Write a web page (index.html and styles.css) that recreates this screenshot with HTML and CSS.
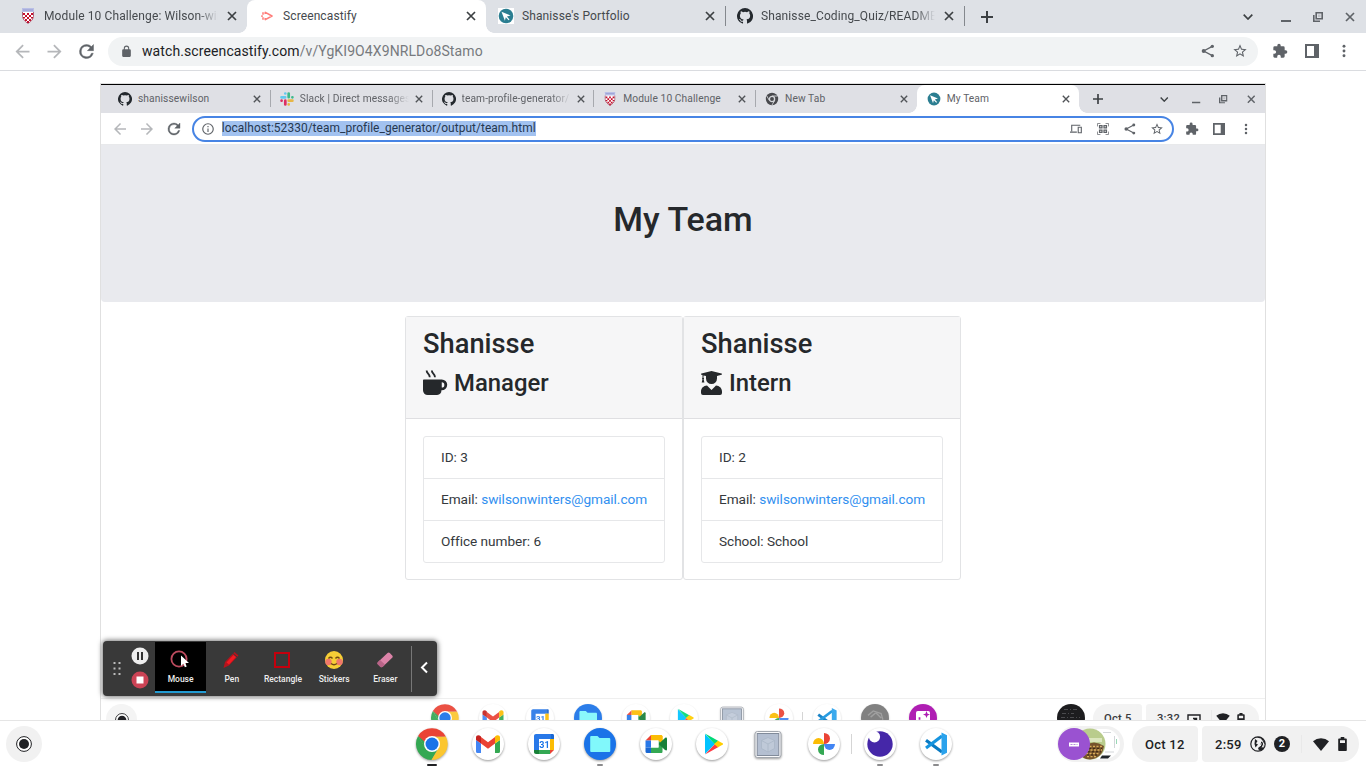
FILE: index.html
```html
<!DOCTYPE html>
<html lang="en">
<head>
<meta charset="utf-8">
<title>Screencastify</title>
<link rel="stylesheet" href="styles.css">
</head>
<body>
<svg class="defs" width="0" height="0">
  <symbol id="x" viewBox="0 0 10 10"><path d="M1 1l8 8M9 1l-8 8" stroke="currentColor" stroke-width="1.7" fill="none"/></symbol>
  <symbol id="plus" viewBox="0 0 12 12"><path d="M6 0v12M0 6h12" stroke="currentColor" stroke-width="2" fill="none"/></symbol>
  <symbol id="chev" viewBox="0 0 10 6"><path d="M.7.7L5 5 9.300.7" stroke="currentColor" stroke-width="1.7" fill="none"/></symbol>
  <symbol id="min" viewBox="0 0 10 10"><path d="M0 9h10" stroke="currentColor" stroke-width="2"/></symbol>
  <symbol id="restore" viewBox="0 0 10 10"><path d="M3.200.8h6v6h-6zM.8 3v6.200h6.200" stroke="currentColor" stroke-width="1.600" fill="none"/><path d="M5 2.500h2.500v2.500H5z" fill="currentColor" opacity=".25"/></symbol>
  <symbol id="back" viewBox="0 0 24 24"><path fill="currentColor" d="M20 11H7.830l5.590-5.590L12 4l-8 8 8 8 1.410-1.410L7.830 13H20v-2z"/></symbol>
  <symbol id="fwd" viewBox="0 0 24 24"><path fill="currentColor" d="M12 4l-1.410 1.410L16.170 11H4v2h12.170l-5.580 5.590L12 20l8-8z"/></symbol>
  <symbol id="reload" viewBox="0 0 24 24"><path fill="currentColor" stroke="currentColor" stroke-width=".5" d="M17.650 6.350A7.960 7.960 0 0 0 12 4a8 8 0 1 0 7.730 10h-2.080A6 6 0 1 1 12 6c1.660 0 3.140.69 4.220 1.780L13 11h7V4l-2.350 2.350z"/></symbol>
  <symbol id="lock" viewBox="0 0 24 24"><path fill="currentColor" d="M18 8h-1V6A5 5 0 0 0 7 6v2H6a2 2 0 0 0-2 2v10c0 1.100.9 2 2 2h12a2 2 0 0 0 2-2V10a2 2 0 0 0-2-2zM9 6a3 3 0 0 1 6 0v2H9V6z"/></symbol>
  <symbol id="info" viewBox="0 0 24 24"><path fill="currentColor" d="M11 7h2v2h-2zm0 4h2v6h-2zm1-9a10 10 0 1 0 0 20 10 10 0 0 0 0-20zm0 18a8 8 0 1 1 0-16 8 8 0 0 1 0 16z"/></symbol>
  <symbol id="share" viewBox="0 0 24 24"><path fill="none" stroke="currentColor" stroke-width="2" d="M18.500 5L5.500 12l13 7"/><g fill="currentColor"><circle cx="18.500" cy="5" r="2.500"/><circle cx="5.500" cy="12" r="3"/><circle cx="18.500" cy="19" r="2.500"/></g></symbol>
  <symbol id="star" viewBox="0 0 24 24"><path fill="currentColor" d="M22 9.240l-7.190-.62L12 2 9.190 8.630 2 9.240l5.460 4.730L5.820 21 12 17.270 18.180 21l-1.630-7.030L22 9.240zM12 15.400l-3.760 2.270 1-4.280-3.320-2.880 4.380-.38L12 6.100l1.710 4.040 4.380.38-3.320 2.880 1 4.280L12 15.400z"/></symbol>
  <symbol id="puzzle" viewBox="0 0 24 24"><path fill="currentColor" d="M20.500 11H19V7a2 2 0 0 0-2-2h-4V3.500a2.500 2.500 0 0 0-5 0V5H4a2 2 0 0 0-2 2v3.800h1.500a2.700 2.700 0 0 1 0 5.400H2V20c0 1.100.9 2 2 2h3.800v-1.500a2.700 2.700 0 0 1 5.400 0V22H17a2 2 0 0 0 2-2v-4h1.500a2.500 2.500 0 0 0 0-5z"/></symbol>
  <symbol id="panel" viewBox="0 0 14 14"><path fill="currentColor" fill-rule="evenodd" d="M0 0h14v14H0zM2 2v10h7V2z"/></symbol>
  <symbol id="menu" viewBox="0 0 14 14"><g fill="currentColor"><circle cx="7" cy="2.200" r="1.450"/><circle cx="7" cy="7" r="1.450"/><circle cx="7" cy="11.800" r="1.450"/></g></symbol>
  <symbol id="devices" viewBox="0 0 14 12"><path fill="none" stroke="currentColor" stroke-width="1.300" d="M12 1.600H2v7M0 9.600h8M9.600 4h3.600v6.300H9.600z"/></symbol>
  <symbol id="qr" viewBox="0 0 14 14"><path fill="none" stroke="currentColor" stroke-width="1.100" opacity=".75" d="M.6 4V.6H4M10 .6h3.400V4M13.400 10v3.400H10M4 13.400H.6V10"/><path fill="none" stroke="currentColor" stroke-width="1.500" d="M3 3h2.800v2.800H3zM8.200 3H11v2.800H8.200zM3 8.200h2.800V11H3zM8.200 8.200H11V11H8.200z"/></symbol>
  <symbol id="gh" viewBox="0 0 16 16"><path fill="#24292e" d="M8 0a8 8 0 0 0-2.530 15.590c.4.070.55-.17.55-.38v-1.490c-2.010.37-2.530-.49-2.690-.94-.09-.23-.48-.94-.82-1.130-.28-.15-.68-.52-.01-.53.63-.01 1.080.58 1.230.82.72 1.210 1.870.87 2.330.66.07-.52.28-.87.51-1.070-1.780-.2-3.640-.89-3.640-3.950 0-.87.31-1.590.82-2.150-.08-.2-.36-1.020.08-2.120 0 0 .67-.21 2.200.82a7.400 7.400 0 0 1 4 0c1.530-1.040 2.200-.82 2.200-.82.44 1.100.16 1.920.08 2.120.51.560.82 1.270.82 2.150 0 3.070-1.870 3.750-3.650 3.950.29.25.54.73.54 1.480v2.200c0 .21.15.46.55.38A8 8 0 0 0 8 0z"/></symbol>
  <symbol id="shield" viewBox="0 0 16 16"><path fill="#fff" d="M2 1h12v7c0 4-3 6-6 8-3-2-6-4-6-8z"/><path fill="#b9bfe6" d="M2 0h12v4H2z"/><path fill="#8d94cc" d="M3 1.600h10v.8H3z"/><path fill="#c4102e" d="M3 5h2v2H3zM7 5h2v2H7zM11 5h2v2h-2zM5 7h2v2H5zM9 7h2v2H9zM3 9h2v1.500H3zM7 9h2v2H7zM11 9h2v1.500h-2zM5 11h2v2H5zM9 11h2v2H9zM7 13h2v2H7z"/><path d="M2.500 4v4.500C3 12 5 13.500 8 15.500c3-2 5-3.500 5.500-7V4" fill="none" stroke="#8b2340" stroke-width=".7"/></symbol>
  <symbol id="cast" viewBox="0 0 14 12"><path d="M4.300 4V2.400L11 6l-6.700 3.600V8" fill="none" stroke="#ff7d7a" stroke-width="1.600" stroke-linejoin="round"/><path fill="#ff9a98" d="M1 2.200h2.200v2.600H1zM1 7.200h2.200v2.600H1zM0 5.300h2v1.600H0z"/></symbol>
  <symbol id="port" viewBox="0 0 16 16"><path class="plate" fill="#fff" d="M0 0h16v16H0z"/><circle cx="8" cy="8" r="7.300" fill="#2b7e91"/><path fill="#fff" d="M3.500 3.700l9 3.800-3.600 1 2.600 2.900-.9.900-2.800-3-.9 3.500z"/></symbol>
  <symbol id="slack" viewBox="0 0 14 14"><g stroke-width="2.700" stroke-linecap="round"><path stroke="#63c9ee" d="M5.300 1.500v0M1.500 5.300h3.700"/><path stroke="#3cb98a" d="M8.700 1.500v3.700M12.400 5.300v0"/><path stroke="#e7b646" d="M8.700 8.700h3.700M8.700 12.400v0"/><path stroke="#dd2e62" d="M5.300 8.700v3.700M1.600 8.700v0"/></g></symbol>
  <symbol id="cgray" viewBox="0 0 14 14"><circle cx="7" cy="7" r="6.200" fill="#48494d"/><circle cx="7" cy="7" r="2.600" fill="#48494d" stroke="#d5d7db" stroke-width="1.300"/><path d="M7 4h5.500M4.400 8.500L1.800 4M9.600 8.500L7 13" stroke="#d5d7db" stroke-width=".9"/></symbol>
  <symbol id="chrome" viewBox="0 0 32 32"><path fill="#34a853" d="M2.140 8A16 16 0 0 0 15.500 32l7-12L16 23.500a8 8 0 0 1-7-4z"/><path fill="#fbc62f" d="M15.500 32A16 16 0 0 0 29.860 8.500H16l6.600 11.600z"/><path fill="#ea4335" d="M2.140 8A16 16 0 0 1 29.860 8.600H16l-6.800 8z"/><path fill="#34a853" d="M2.140 8l7 12L12 18 9 14z"/><circle cx="16" cy="16" r="8" fill="#fff"/><circle cx="16" cy="16" r="6.500" fill="#1a73e8"/></symbol>
  <symbol id="gmail" viewBox="0 0 32 32"><circle cx="16" cy="16" r="16" fill="#fff"/><path fill="#4285f4" d="M4 12l5 3.500V25H5.500A1.500 1.500 0 0 1 4 23.500z"/><path fill="#34a853" d="M23 15.500l5-3.500v11.500a1.500 1.500 0 0 1-1.500 1.500H23z"/><path fill="#ea4335" d="M9 9l7 5.300L23 9v6.500l-7 5.300-7-5.300z"/><path fill="#c5221f" d="M4 9.500C4 7 7 6.500 9 8.500v7L4 12z"/><path fill="#fbbc04" d="M28 9.500c0-2.500-3-3-5-1v7l5-3.500z"/></symbol>
  <symbol id="cal" viewBox="0 0 32 32"><circle cx="16" cy="16" r="16" fill="#fff"/><path fill="#2878e8" d="M8 6h15v5H11v11H6V8c0-1.200.8-2 2-2z"/><path fill="#1967d2" d="M23 6h1.500c1 0 1.500.6 1.500 1.500V11h-3z"/><path fill="#fbbc04" d="M22 11h4v11h-4z"/><path fill="#188038" d="M6 22h5v4H8c-1.200 0-2-.8-2-2z"/><path fill="#34a853" d="M11 22h11v4H11z"/><path fill="#ea4335" d="M22 22h4l-4 4z"/><text x="16.500" y="19.800" text-anchor="middle" class="caltext">31</text></symbol>
  <symbol id="files" viewBox="0 0 32 32"><circle cx="16" cy="16" r="16" fill="#1a73e8"/><path fill="#81f8fb" d="M7.500 8h6l2 2h9.500c.8 0 1.300.5 1.300 1.300v11.400c0 .8-.5 1.300-1.300 1.300H7.500c-.8 0-1.300-.5-1.300-1.300V9.300C6.200 8.500 6.700 8 7.500 8z"/></symbol>
  <symbol id="meet" viewBox="0 0 32 32"><circle cx="16" cy="16" r="16" fill="#fff"/><path fill="#ea4335" d="M5.500 12.500L11 7v5.500z"/><path fill="#2878e8" d="M5.500 12.500H11v7H5.500z"/><path fill="#1967d2" d="M5.500 19.500H11V25H7a1.500 1.500 0 0 1-1.500-1.500z"/><path fill="#fbbc04" d="M11 7h10c1 0 1.500.6 1.500 1.500V16l-4-3.500H11z"/><path fill="#34a853" d="M11 19.500h7.500V12.500l4 3.500v7.500c0 1-.5 1.500-1.500 1.500H11z"/><path fill="#fbbc04" d="M18.500 12.500V8h4v8z"/><path fill="#188038" d="M18.500 16l6.500-6c1-.8 2-.6 2 .5v11c0 1.100-1 1.300-2 .5z"/><path fill="#fff" d="M11 12.500h7.500v7H11z"/></symbol>
  <symbol id="play" viewBox="0 0 32 32"><circle cx="16" cy="16" r="16" fill="#fff"/><path fill="#00c3ff" d="M9 6l10 10L9 26z"/><path fill="#00d977" d="M9 5.500L22.500 13 19 16.500z"/><path fill="#ff3a44" d="M9 26.500l13.500-7.500-3.500-3z"/><path fill="#ffce00" d="M22 12.700l5 2.800v1l-5 2.800-4-3.300z"/></symbol>
  <symbol id="cube" viewBox="0 0 32 32"><rect x="3" y="3.500" width="26" height="26" rx="2.500" fill="#f8f8fa" stroke="#a2a7ae"/><rect x="5.200" y="5.500" width="21.600" height="22" fill="#b4bfd1" stroke="#818b9a"/><path fill="#bfc9d8" stroke="#aab6c6" stroke-width=".8" d="M16 9.500l6.500 3v8L16 24l-6.500-3.500v-8z"/><path fill="none" stroke="#aab6c6" stroke-width=".8" d="M9.500 12.500l6.500 3.500 6.500-3.500M16 16v8"/></symbol>
  <symbol id="photos" viewBox="0 0 32 32"><circle cx="16" cy="16" r="16" fill="#fff"/><path fill="#ea4335" d="M16 5a6 5.500 0 0 1 0 11z"/><path fill="#4285f4" d="M27 16a5.500 6 0 0 1-11 0z"/><path fill="#34a853" d="M16 27a6 5.500 0 0 1 0-11z"/><path fill="#fbbc04" d="M5 16a5.500 6 0 0 1 11 0z"/></symbol>
  <symbol id="moon" viewBox="0 0 32 32"><circle cx="16" cy="16" r="16" fill="#fff"/><circle cx="16" cy="16" r="12.700" fill="#4527a8"/><circle cx="10.500" cy="8.800" r="5.600" fill="#fff"/></symbol>
  <symbol id="code" viewBox="0 0 32 32"><circle cx="16" cy="16" r="16" fill="#fff"/><path fill="none" stroke="#0879c2" stroke-width="3.200" d="M6 12.200l16 11.800"/><path fill="none" stroke="#1694df" stroke-width="3.200" d="M6 20L22 8"/><path fill="#2aa2ec" d="M21.500 4.500L27 7.300v17.400l-5.500 2.800z"/></symbol>
  <symbol id="gball" viewBox="0 0 32 32"><circle cx="16" cy="16" r="16" fill="#777"/><path d="M8 13l6-5 9 3 2 7M11 15l6-5 6 6" fill="none" stroke="#999" stroke-width="1.500"/></symbol>
  <symbol id="purple" viewBox="0 0 32 32"><circle cx="16" cy="16" r="16" fill="#a90cad"/><rect x="8" y="8" width="16" height="16" rx="2" fill="#fff"/><path fill="#a90cad" d="M20 8l1.200 3L24 12l-2.800 1-1.200 3-1.200-3-2.800-1 2.800-1zM11 15h2v3h-2z"/></symbol>
  <symbol id="rec" viewBox="0 0 16 16"><circle cx="8" cy="8" r="7.400" fill="#fff" stroke="#202124"/><circle cx="8" cy="8" r="5" fill="#202124"/></symbol>
  <symbol id="wifi" viewBox="0 0 16 13"><path fill="#202124" d="M0 3.300a12 12 0 0 1 16 0L8 13z"/></symbol>
  <symbol id="batt" viewBox="0 0 9 14"><path fill="#202124" fill-rule="evenodd" d="M2.700 0h3.600v1.500H8c.5 0 .8.300.8.800v10.900c0 .5-.3.800-.8.800H1c-.5 0-.8-.3-.8-.8V2.300c0-.5.300-.8.800-.8h1.700zM2 3.300v2.700h5V3.300z"/></symbol>
</svg>

<div class="tabs">
  <div class="tab"><svg class="fav"><use href="#shield"/></svg><span class="ttl fade">Module 10 Challenge: Wilson-win</span><svg class="cls"><use href="#x"/></svg></div>
  <div class="tab active"><svg class="fav castfav"><use href="#cast"/></svg><span class="ttl">Screencastify</span><svg class="cls"><use href="#x"/></svg></div>
  <div class="tab"><svg class="fav"><use href="#port"/></svg><span class="ttl">Shanisse's Portfolio</span><svg class="cls"><use href="#x"/></svg></div>
  <div class="tab sep"><svg class="fav"><use href="#gh"/></svg><span class="ttl fade">Shanisse_Coding_Quiz/README</span><svg class="cls"><use href="#x"/></svg></div>
  <div class="newtab sep"><svg><use href="#plus"/></svg></div>
  <div class="wins"><svg class="chev"><use href="#chev"/></svg><svg class="low"><use href="#min"/></svg><svg><use href="#restore"/></svg><svg><use href="#x"/></svg></div>
</div>
<div class="bar">
  <i class="slot dim"><svg class="big"><use href="#back"/></svg></i><i class="slot dim"><svg class="big"><use href="#fwd"/></svg></i><i class="slot"><svg class="big"><use href="#reload"/></svg></i>
  <div class="omni"><svg class="lock"><use href="#lock"/></svg><span class="url"><b>watch.screencastify.com</b>/v/YgKI9O4X9NRLDo8Stamo</span>
    <i class="slot push"><svg class="mid"><use href="#share"/></svg></i><i class="slot"><svg class="mid"><use href="#star"/></svg></i></div>
  <i class="slot"><svg class="mid"><use href="#puzzle"/></svg></i><i class="slot"><svg class="sm"><use href="#panel"/></svg></i><i class="slot"><svg class="sm"><use href="#menu"/></svg></i>
</div>

<main class="page">
  <div class="video">
    <div class="tabs">
      <div class="tab"><svg class="fav"><use href="#gh"/></svg><span class="ttl">shanissewilson</span><svg class="cls"><use href="#x"/></svg></div>
      <div class="tab sep"><svg class="fav"><use href="#slack"/></svg><span class="ttl fade">Slack | Direct messages</span><svg class="cls"><use href="#x"/></svg></div>
      <div class="tab sep"><svg class="fav"><use href="#gh"/></svg><span class="ttl fade">team-profile-generator/</span><svg class="cls"><use href="#x"/></svg></div>
      <div class="tab sep"><svg class="fav"><use href="#shield"/></svg><span class="ttl">Module 10 Challenge</span><svg class="cls"><use href="#x"/></svg></div>
      <div class="tab sep"><svg class="fav"><use href="#cgray"/></svg><span class="ttl">New Tab</span><svg class="cls"><use href="#x"/></svg></div>
      <div class="tab active"><svg class="fav"><use href="#port"/></svg><span class="ttl">My Team</span><svg class="cls"><use href="#x"/></svg></div>
      <div class="newtab"><svg><use href="#plus"/></svg></div>
      <div class="wins"><svg class="chev"><use href="#chev"/></svg><svg class="low"><use href="#min"/></svg><svg><use href="#restore"/></svg><svg><use href="#x"/></svg></div>
    </div>
    <div class="bar">
      <i class="slot dim"><svg class="big"><use href="#back"/></svg></i><i class="slot dim"><svg class="big"><use href="#fwd"/></svg></i><i class="slot"><svg class="big"><use href="#reload"/></svg></i>
      <div class="omni"><svg class="lock"><use href="#info"/></svg><span class="url selected">localhost:52330/team_profile_generator/output/team.html</span>
        <i class="slot push"><svg class="sm"><use href="#devices"/></svg></i><i class="slot"><svg class="sm"><use href="#qr"/></svg></i><i class="slot"><svg class="mid"><use href="#share"/></svg></i><i class="slot"><svg class="mid"><use href="#star"/></svg></i></div>
      <i class="slot"><svg class="mid"><use href="#puzzle"/></svg></i><i class="slot"><svg class="sm"><use href="#panel"/></svg></i><i class="slot"><svg class="sm"><use href="#menu"/></svg></i>
    </div>
    <header class="jumbo"><h1>My Team</h1></header>
    <section class="cards">
      <article class="card">
        <div class="head"><h2>Shanisse</h2><h3><svg class="mug" viewBox="0 0 24 24"><path fill="currentColor" d="M1 9h17a4.800 4.800 0 0 1 0 10.500h-.3A4.500 4.500 0 0 1 13.500 24h-9A4.500 4.500 0 0 1 0 19.500V10c0-.6.4-1 1-1zm17 2.800v5a2.500 2.500 0 0 0 0-5z"/><path d="M3.500.5c0 3.200 3 2.800 3 6.500M8.500.5c0 3.200 3 2.800 3 6.500" stroke="currentColor" stroke-width="1.800" fill="none"/></svg>Manager</h3></div>
        <ul><li>ID: 3</li><li>Email: <a>swilsonwinters@gmail.com</a></li><li>Office number: 6</li></ul>
      </article>
      <article class="card">
        <div class="head"><h2>Shanisse</h2><h3><svg class="grad" viewBox="0 0 21 24"><path fill="currentColor" d="M.5 2.600L10.500 0l10 2.600c.7.200.7 1 0 1.200L16 5v2.500a5.500 5.500 0 0 1-11 0V5l-2.500-.6v2.300c.7.400.7 1.200.1 1.600l.8 3.200H.7l.8-3.200c-.6-.4-.6-1.200 0-1.600V4L.5 3.800c-.7-.2-.7-1 0-1.200zM6 14.500l4.500 4.500 4.500-4.500c3.500.2 6 2.800 6 6V22a2 2 0 0 1-2 2H2a2 2 0 0 1-2-2v-1.500c0-3.200 2.500-5.800 6-6z"/></svg>Intern</h3></div>
        <ul><li>ID: 2</li><li>Email: <a>swilsonwinters@gmail.com</a></li><li>School: School</li></ul>
      </article>
    </section>
    <div class="tools">
      <svg class="grip" viewBox="0 0 8 14"><path stroke="#bbb" stroke-width="2" stroke-dasharray="2 3.500" d="M1.500 0v14M6.500 0v14"/></svg>
      <div class="recs">
        <svg viewBox="0 0 18 18"><circle cx="9" cy="9" r="8.500" fill="#eee"/><path stroke="#333" stroke-width="2" d="M7 5v8M11 5v8"/></svg>
        <svg viewBox="0 0 18 18"><circle cx="9" cy="9" r="8.500" fill="#cb4355"/><path fill="#fff" d="M5.500 5.500h7v7h-7z"/></svg>
      </div>
      <div class="tool on"><svg viewBox="0 0 20 20"><circle cx="9" cy="9" r="7.600" fill="none" stroke="#bd4b5e" stroke-width="1.800"/><path fill="#fff" d="M11 5.500V16l2.400-2.200 1.500 3.400 1.800-.8-1.500-3.300H19z"/></svg>Mouse</div>
      <div class="tool"><svg viewBox="0 0 20 20"><path fill="#b5131c" d="M13.500 2l4 3.500L8 15.500 2.500 18l1.500-6z"/><path fill="#f31a22" d="M12.500 5l2.500 2-7 7.500-2.500-2z"/><path stroke="#3a3a3a" d="M12 3.500l4 3.500"/></svg>Pen</div>
      <div class="tool"><svg viewBox="0 0 20 20"><path fill="none" stroke="#c4000d" stroke-width="2" d="M3 3h14v14H3z"/></svg>Rectangle</div>
      <div class="tool"><svg viewBox="0 0 20 20"><circle cx="10" cy="10" r="9" fill="#f6ce36"/><circle cx="4.500" cy="12" r="3.200" fill="#f0776b"/><circle cx="15.500" cy="12" r="3.200" fill="#f0776b"/><path fill="none" stroke="#704913" stroke-width="1.300" d="M4.500 8.500q2-2.500 4 0M11.500 8.500q2-2.500 4 0M7 13.500q3 2.500 6 0"/></svg>Stickers</div>
      <div class="tool"><svg viewBox="0 0 20 20"><path fill="#dc83a8" d="M2.500 12.500L12.500 3c.8-.8 1.600-.8 2.300 0l2.400 2.500c.7.700.7 1.500 0 2.200L7.500 17z"/><path fill="#b96488" d="M2.500 12.500L5 10l5 4.500L7.500 17c-.7.600-1.500.6-2.200 0l-2.800-2.800c-.6-.6-.6-1 0-1.700z"/></svg>Eraser</div>
      <div class="fold"><svg viewBox="0 0 8 12"><path d="M7 1L2 6l5 5" fill="none" stroke="#fff" stroke-width="2"/></svg></div>
    </div>
    <div class="shelf">
      <div class="launch"><svg><use href="#rec"/></svg></div>
      <div class="apps">
        <i><svg><use href="#chrome"/></svg></i><i><svg><use href="#gmail"/></svg></i><i><svg><use href="#cal"/></svg></i><i><svg><use href="#files"/></svg></i><i><svg><use href="#meet"/></svg></i><i><svg><use href="#play"/></svg></i><i><svg><use href="#cube"/></svg></i><i><svg><use href="#photos"/></svg></i><i class="split"><svg><use href="#code"/></svg></i><i><svg><use href="#gball"/></svg></i><i><svg><use href="#purple"/></svg></i>
      </div>
      <div class="dark"><svg viewBox="0 0 28 28"><circle cx="14" cy="14" r="14" fill="#1d1d1f"/><path stroke="#4b4b4e" stroke-dasharray="4 2 1 2" d="M7 5.500h14M5 9.500h12M4 13.500h19"/></svg></div>
      <div class="date">Oct 5</div>
      <div class="status"><span>3:32</span><svg class="castic" viewBox="0 0 14 14"><path fill="none" stroke="#202124" stroke-width="1.400" d="M1 12V3h12v9M5 10l4-3M6 6.500h3.500V10"/></svg><i class="line"></i><svg class="wifi"><use href="#wifi"/></svg><svg class="batt"><use href="#batt"/></svg></div>
    </div>
  </div>
</main>

<footer class="shelf">
  <div class="launch"><svg><use href="#rec"/></svg></div>
  <div class="apps">
    <i class="run cur"><svg><use href="#chrome"/></svg></i><i><svg><use href="#gmail"/></svg></i><i><svg><use href="#cal"/></svg></i><i class="run"><svg><use href="#files"/></svg></i><i><svg><use href="#meet"/></svg></i><i><svg><use href="#play"/></svg></i><i><svg><use href="#cube"/></svg></i><i><svg><use href="#photos"/></svg></i><i class="split run"><svg><use href="#moon"/></svg></i><i class="run"><svg><use href="#code"/></svg></i>
  </div>
  <div class="tote"><svg viewBox="0 0 67 36">
    <rect width="67" height="36" rx="18" fill="#f1f1f1"/>
    <path fill="#fff" d="M40 3h8a15 15 0 0 1 0 30H40z"/><path fill="#20252b" d="M45 29.500h9l-3 3h-8z"/><path stroke="#d3d6d9" d="M46 6.500h8M57.500 10v12M48 26h9"/><path stroke="#9ad9b6" d="M59.500 13v5"/>
    <circle cx="33" cy="18" r="15.500" fill="#b9cc8c"/><path fill="#dbe6bd" d="M31 12h14v4H31z"/><path fill="#76532c" d="M27 20q10-7 20 0c-1 8-6 13-14 13.500-3 0-5-1-7-2z"/><path stroke="#d9ad58" stroke-width="1.500" stroke-dasharray="2 1.500" fill="none" d="M29 20.500h17M30 24h15M29 27.500h13M30 30.500h9"/><path stroke="#33210f" stroke-dasharray="2 2" d="M28 22.300h17M31 25.800h13M30 29h11"/>
    <circle cx="17" cy="18" r="16" fill="#9a52d1"/><path fill="#fff" d="M12 16.500h10v4H12z"/><path stroke="#b68add" d="M13.500 18.500h7" stroke-dasharray="2 1"/>
  </svg></div>
  <div class="date">Oct 12</div>
  <div class="status"><span>2:59</span><svg class="globe" viewBox="0 0 16 16"><circle cx="8" cy="8" r="7.200" fill="#f1f1f1" stroke="#202124" stroke-width="1.200"/><path fill="#202124" d="M6.500 1.500L11 2.500l1.500 2.500-2 1.500v3.500L8 12l1 2.500h3l2-2-1-2.500 2-3-2-4L9.500.7zM5 3l2.500 2L6 7.500l2 1-2.500 3L4.500 8z"/><path stroke="#f1f1f1" fill="none" d="M10.300 6q1.700 2 0 4M12.200 4.500q3 3.500 0 7"/></svg><em>2</em><i class="line"></i><svg class="wifi"><use href="#wifi"/></svg><svg class="batt"><use href="#batt"/></svg></div>
</footer>
</body>
</html>
```
FILE: styles.css
```css
* { box-sizing: border-box; }
body { margin: 0; width: 1366px; height: 768px; overflow: hidden; background: #fff; font-family: Roboto, "Noto Sans", sans-serif; color: #202124; display: flex; flex-direction: column; }
svg { display: block; flex: none; overflow: visible; }
svg.defs { position: absolute; }
i { font-style: normal; }
h1, h2, h3, ul { margin: 0; padding: 0; font-weight: 500; }
.caltext { font: 700 9px Roboto, sans-serif; fill: #1a73e8; }

/* tab strip */
.tabs { display: flex; flex: none; height: 33px; padding-left: 8px; background: #dee1e6; color: #45494d; font-size: 12px; position: relative; }
.tab { display: flex; align-items: center; width: 239px; padding: 0 10px 1px 12px; position: relative; }
.tab.active { background: #fff; border-radius: 8px 8px 0 0; z-index: 1; }
.tab.active::before, .tab.active::after { content: ""; position: absolute; bottom: 0; width: 8px; height: 8px; }
.tab.active::before { left: -8px; background: radial-gradient(circle at 0 0, transparent 7.500px, #fff 8px); }
.tab.active::after { right: -8px; background: radial-gradient(circle at 100% 0, transparent 7.500px, #fff 8px); }
.sep::before { content: ""; position: absolute; left: 0; top: 6px; width: 1px; height: 20px; background: #84888d; }
.fav { width: 16px; height: 16px; }
.castfav { width: 14px; height: 12px; margin: 0 0 0 2px; }
.ttl { width: 174px; margin-left: 8px; white-space: nowrap; letter-spacing: .11px; }
.fade { -webkit-mask-image: linear-gradient(90deg, #000 calc(100% - 20px), transparent); mask-image: linear-gradient(90deg, #000 calc(100% - 20px), transparent); }
.cls { width: 10px; height: 10px; margin-left: 9px; color: #3c4043; }
.newtab { position: relative; width: 46px; display: flex; align-items: center; justify-content: center; color: #3c4043; }
.newtab svg { width: 12px; height: 12px; }
.wins { margin-left: auto; display: flex; align-items: center; gap: 22px; padding-right: 11px; color: #5f6368; }
.wins svg { width: 10px; height: 10px; }
.wins .chev { height: 6px; margin-right: 6px; color: #3c4043; }

/* toolbar */
.bar { display: flex; flex: none; align-items: center; height: 38px; padding: 0 6px 1px; border-bottom: 1px solid #dadce0; color: #5f6368; background: #fff; }
.slot { display: flex; justify-content: center; align-items: center; width: 32px; flex: none; }
.dim { color: #b5b7ba; }
.big { width: 21px; height: 21px; }
.mid { width: 16px; height: 16px; }
.sm { width: 14px; height: 14px; }
.omni { display: flex; align-items: center; flex: 1; height: 29px; margin: 0 6px; padding: 0 2px 0 11.500px; border-radius: 15px; background: #f1f3f4; }
.lock { width: 13px; height: 13px; margin-right: 9.500px; }
.url { font-size: 14px; color: #777a7e; letter-spacing: .1px; white-space: nowrap; }
.url b { font-weight: 400; color: #202124; }
.push { margin-left: auto; }

/* page and recorded video */
.page { flex: none; height: 649px; padding: 12px 100px 0; overflow: hidden; }
.video { position: relative; display: flex; flex-direction: column; width: 1166px; height: 637px; border: 1px solid #e0e0e0; border-bottom: 0; }
.video .tabs { height: 29px; padding-left: 7px; border-top: 1px solid #000; font-size: 10.220px; background: #dfe0e5; color: #606267; }
.video .tab { width: 161.750px; padding: 0 8px 1px 10px; }
.video .sep::before { height: 17px; top: 5px; background: #a7a9ae; }
.video .fav { width: 14px; height: 14px; }
.video .ttl { width: 109px; margin-left: 6px; letter-spacing: .1px; }
.video .cls { width: 8px; height: 8px; margin-left: 6px; color: #505357; }
.video .newtab { width: 38px; }
.video .newtab svg { width: 10px; height: 10px; }
.video .wins { gap: 19px; padding-right: 10px; }
.video .wins svg { width: 8.500px; height: 8.500px; }
.video .wins .chev { height: 5px; margin-right: 4px; }
.video .bar { height: 32px; padding: 0 5px 0 5px; border-color: #e8e9eb; }
.video .slot { width: 27.300px; }
.video .big { width: 18px; height: 18px; }
.video .mid { width: 14px; height: 14px; }
.video .sm { width: 12px; height: 12px; }
.video .omni { height: 26px; margin: 0 4px 0 3.800px; padding: 0 1px 0 7.500px; border: 2px solid #4784e4; background: #fff; border-radius: 13px; }
.video .lock { width: 14px; height: 14px; margin-right: 6.500px; }
.video .url { font-size: 11.930px; letter-spacing: .055px; line-height: 15px; color: #26384f; }
.selected { background: #a2c2f0; }
.jumbo { flex: none; height: 157px; padding-top: 53px; background: #e9eaee; border-radius: 0 0 4px 4px; text-align: center; }
h1 { font-size: 34px; line-height: 42px; color: #25282b; }
.cards { display: flex; justify-content: center; margin-top: 14px; }
.card { width: 278px; height: 264px; border: 1px solid #e2e3e5; border-radius: 3px; color: #25282b; }
.head { height: 102px; padding: 11px 17px; background: #f6f6f7; border-bottom: 1px solid #dfdfe2; }
h2 { font-size: 27.300px; line-height: 33px; }
h3 { font-size: 23.900px; line-height: 29px; margin-top: 8px; display: flex; align-items: center; }
.mug { width: 25px; height: 25px; margin: -2px 6px 0 0; }
.grad { width: 21px; height: 24px; margin: -2px 7px 0 0; }
.card ul { margin: 17px; border: 1px solid #e6e7e9; border-radius: 3px; list-style: none; font-size: 13.630px; letter-spacing: -.04px; font-weight: 400; color: #35393d; }
.card li { height: 42px; padding-left: 17px; line-height: 40px; border-bottom: 1px solid #e6e7e9; white-space: nowrap; }
.card li:last-child { height: 41px; border: 0; }
.card a { color: #3290f0; }

/* recorder tools float over the page */
.tools { position: absolute; left: 2px; top: 557px; width: 334px; height: 55px; display: flex; align-items: center; background: #393939; border-radius: 4px; box-shadow: 0 0 5px 1px #777; color: #eee; font-size: 8.500px; font-weight: 500; }
.grip { width: 8px; height: 14px; margin-left: 9.500px; }
.recs { display: flex; flex-direction: column; gap: 6px; margin: 0 6.500px 2px 10px; }
.recs svg { width: 18px; height: 18px; }
.tool { width: 51.200px; height: 51px; margin-bottom: 2px; padding-top: 8px; display: flex; flex-direction: column; align-items: center; gap: 4px; line-height: 10px; }
.tool svg { width: 20px; height: 20px; margin-left: -1px; }
.on { background: #000; border-bottom: 2px solid #229bd2; }
.fold { height: 46px; border-left: 1px solid #777; padding: 0 0 2px 8px; display: flex; align-items: center; }
.fold svg { width: 8px; height: 13px; }

/* shelf */
.shelf { display: flex; align-items: flex-start; height: 48px; padding: 5px 7px 0 6px; border-top: 1px solid #e5e5e5; background: #fff; }
.launch { width: 36px; height: 36px; border-radius: 50%; background: #f1f1f1; display: flex; align-items: center; justify-content: center; }
.launch svg { width: 16px; height: 16px; }
.apps { display: flex; margin-left: 362px; }
.apps i { width: 56px; height: 42px; padding-top: 2px; display: flex; flex-direction: column; align-items: center; position: relative; }
.apps svg { width: 32px; height: 32px; filter: drop-shadow(0 1px 1px #0006); }
.run::after { content: ""; width: 6px; height: 2px; margin-top: 4px; background: #8b8b8d; border-radius: 1px; }
.cur::after { width: 10px; background: #202124; }
.split::before { content: ""; position: absolute; left: -1px; top: 8px; width: 1px; height: 20px; background: #d5d5d5; }
.tote { margin-left: auto; width: 67px; height: 36px; }
.date, .status { display: flex; align-items: center; height: 36px; background: #f1f1f1; font-size: 13px; font-weight: 500; letter-spacing: .25px; white-space: nowrap; }
.date { width: 66px; margin-left: 8px; padding-left: 13px; border-radius: 18px 4px 4px 18px; }
.status { width: 157px; margin-left: 4px; padding-left: 13px; border-radius: 4px 18px 18px 4px; }
.status span { width: 28px; }
.globe { width: 16px; height: 16px; margin-left: 7px; }
.status em { width: 16px; height: 16px; margin-left: 8px; border-radius: 50%; background: #202124; color: #fff; font: 700 11px/16px Roboto, sans-serif; text-align: center; }
.line { width: 1px; height: 18px; margin-left: 11px; background: #e9e9e9; }
.wifi { width: 16px; height: 13px; margin-left: 11px; }
.batt { width: 9px; height: 14px; margin-left: 9px; }

.video .shelf { margin-top: auto; height: 22px; flex: none; padding: 5px 6px 0 5px; overflow: hidden; border-color: #efefef; }
.video .launch { width: 31px; height: 31px; background: #f4f4f4; }
.video .launch svg { width: 14px; height: 14px; }
.video .apps { margin-left: 284px; }
.video .apps i { width: 47.800px; padding-top: 0; }
.video .apps svg { width: 28px; height: 28px; opacity: .92; filter: drop-shadow(0 1px 1px #0003); }
.dark { margin-left: auto; }
.dark svg { width: 28px; height: 28px; }
.video .date, .video .status { height: 29px; font-size: 11.200px; background: #f3f3f3; color: #3a3b3e; }
.video .date { width: 49px; padding-left: 11px; }
.video .status { width: 113px; padding-left: 11px; }
.video .status span { width: 24px; }
.castic { width: 14px; height: 14px; margin-left: 6px; }
.video .line { margin-left: 10px; }
.video .wifi { width: 14px; height: 11px; margin-left: 4px; }
.video .batt { width: 8px; height: 12px; margin-left: 7px; }
```
